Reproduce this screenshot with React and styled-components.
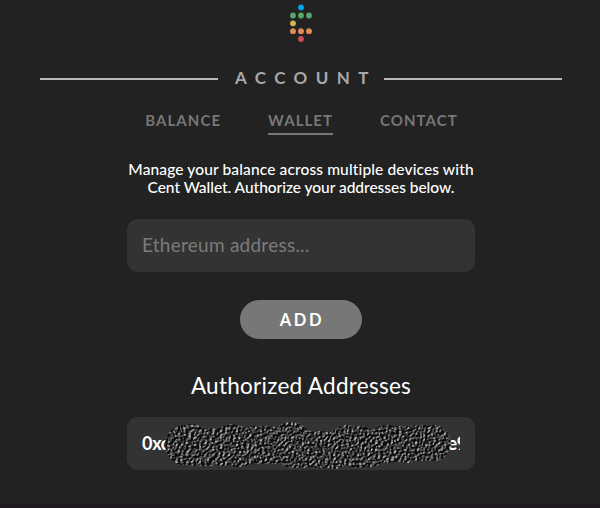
import React from "react";
import styled, { createGlobalStyle } from "styled-components";

const tabs = [
  { label: "BALANCE", active: false },
  { label: "WALLET", active: true },
  { label: "CONTACT", active: false },
];

const dots = [
  { x: 31, y: 7.5, color: "#00a4ea" },
  { x: 23, y: 15.5, color: "#55a868" },
  { x: 31, y: 15.5, color: "#55a868" },
  { x: 39, y: 15.5, color: "#55a868" },
  { x: 23, y: 23.3, color: "#ccb650" },
  { x: 23, y: 31.2, color: "#e08a58" },
  { x: 31, y: 31.2, color: "#e08a58" },
  { x: 39, y: 31.2, color: "#e08a58" },
  { x: 31, y: 39, color: "#d14c5c" },
];

// brush stamps: center x, center y, radius
const stamps = [
  [58, 28, 20],
  [64, 26, 19],
  [72, 31, 19],
  [84, 30, 19],
  [95, 30, 19],
  [106, 27, 20],
  [112, 30, 20],
  [128, 28, 19],
  [137, 28, 19],
  [148, 28, 19],
  [164, 25, 20],
  [166, 31, 20],
  [178, 32, 19],
  [193, 33, 19],
  [207, 33, 19],
  [221, 28, 20],
  [232, 30, 21],
  [243, 31, 19],
  [260, 27, 19],
  [270, 27, 18],
  [282, 27, 19],
  [294, 26, 18],
  [306, 26, 18],
];

const Logo = () => (
  <LogoSvg width="62" height="48" viewBox="0 0 62 48">
    {dots.map((d) => (
      <circle key={`${d.x}-${d.y}`} cx={d.x} cy={d.y} r="2.9" fill={d.color} />
    ))}
  </LogoSvg>
);

const Scribble = () => (
  <ScribbleSvg width="348" height="54" viewBox="0 0 348 54">
    <filter
      id="emboss"
      filterUnits="userSpaceOnUse"
      x="0"
      y="0"
      width="348"
      height="54"
      colorInterpolationFilters="sRGB"
    >
      <feTurbulence
        type="fractalNoise"
        baseFrequency="0.38 0.42"
        numOctaves="3"
        seed="8"
        result="noise"
      />
      <feDiffuseLighting
        in="noise"
        surfaceScale="5"
        diffuseConstant="1"
        lightingColor="#ffffff"
        result="light"
      >
        <feDistantLight azimuth="215" elevation="25" />
      </feDiffuseLighting>
      <feComponentTransfer in="light" result="toned">
        <feFuncR type="table" tableValues="0.05 0.18 0.26 0.36 0.72" />
        <feFuncG type="table" tableValues="0.05 0.18 0.26 0.36 0.72" />
        <feFuncB type="table" tableValues="0.05 0.18 0.26 0.36 0.72" />
      </feComponentTransfer>
      <feComposite in="toned" in2="SourceGraphic" operator="in" />
    </filter>
    <g filter="url(#emboss)">
      {stamps.map(([x, y, r]) => (
        <circle key={`${x}-${y}`} cx={x} cy={y} r={r} />
      ))}
    </g>
  </ScribbleSvg>
);

const App = () => {
  return (
    <Page>
      <GlobalStyle />
      <Logo />
      <TitleRow>
        <Line />
        <Title>ACCOUNT</Title>
        <Line />
      </TitleRow>
      <Tabs>
        {tabs.map((tab) => (
          <Tab key={tab.label} $active={tab.active}>
            {tab.label}
          </Tab>
        ))}
      </Tabs>
      <Description>
        <DescLine $spacing="0.13px">
          Manage your balance across multiple devices with
        </DescLine>
        <DescLine $spacing="-0.03px">
          Cent Wallet. Authorize your addresses below.
        </DescLine>
      </Description>
      <AddressInput placeholder="Ethereum address..." />
      <AddButton>ADD</AddButton>
      <Heading>Authorized Addresses</Heading>
      <AddressBox>
        <AddressText>
          <span>0xc</span>
          <span>e9</span>
        </AddressText>
        <Scribble />
      </AddressBox>
      <BottomEdge />
    </Page>
  );
};

export default App;

const GlobalStyle = createGlobalStyle`
  * {
    box-sizing: border-box;
  }
  body {
    margin: 0;
    background-color: #222222;
    font-family: Lato, "Liberation Sans", sans-serif;
  }
`;
const Page = styled.main`
  display: flex;
  flex-direction: column;
  align-items: center;
  width: 600px;
  height: 508px;
  overflow: hidden;
  background-color: #222222;
  color: #ffffff;
`;
const LogoSvg = styled.svg`
  flex: none;
  margin-left: 2px;
`;
const TitleRow = styled.header`
  display: flex;
  align-items: center;
  width: 522px;
  height: 24px;
  margin: 19px 0 0 2px;
`;
const Line = styled.div`
  width: 178px;
  height: 2px;
  background-color: #b9b9b9;
`;
const Title = styled.h1`
  width: 166px;
  margin: 0;
  padding-left: 17px;
  color: #a8a8a8;
  font-size: 17px;
  font-weight: 700;
  line-height: 22px;
  padding-bottom: 2px;
  letter-spacing: 8.4px;
  white-space: nowrap;
`;
const Tabs = styled.nav`
  display: flex;
  gap: 47px;
  height: 24px;
  margin: 20px 0 0 3px;
`;
const Tab = styled.a`
  height: 24px;
  border-bottom: 2px solid ${({ $active }) => ($active ? "#777777" : "transparent")};
  color: #777777;
  font-size: 15px;
  font-weight: 700;
  line-height: 19px;
  letter-spacing: 1.05px;
`;
const Description = styled.p`
  display: flex;
  flex-direction: column;
  align-items: center;
  margin: 25px 0 0 2px;
`;
const DescLine = styled.span`
  font-size: 15.5px;
  font-weight: 500;
  line-height: 18px;
  letter-spacing: ${({ $spacing }) => $spacing};
  white-space: nowrap;
`;
const AddressInput = styled.input`
  flex: none;
  width: 348px;
  height: 53px;
  margin: 23px 0 0 2px;
  padding: 0 15px 2px;
  border: none;
  border-radius: 11px;
  outline: none;
  background-color: #333333;
  font-family: inherit;
  font-size: 19px;
  letter-spacing: 0.25px;
  &::placeholder {
    color: #7b7b7b;
  }
`;
const AddButton = styled.button`
  flex: none;
  width: 122px;
  height: 39px;
  margin: 28px 0 0 2px;
  padding: 0 0 0 2px;
  border: none;
  border-radius: 20px;
  background-color: #777777;
  color: #ffffff;
  font-family: inherit;
  font-size: 16.5px;
  font-weight: 700;
  letter-spacing: 2.6px;
`;
const Heading = styled.h2`
  margin: 32px 0 0 2px;
  font-size: 22.5px;
  font-weight: 400;
  line-height: 30px;
  letter-spacing: 0.27px;
`;
const AddressBox = styled.div`
  position: relative;
  flex: none;
  width: 348px;
  height: 53px;
  margin: 16px 0 0 2px;
  padding: 0 15px;
  border-radius: 11px;
  background-color: #333333;
`;
const AddressText = styled.div`
  display: flex;
  justify-content: space-between;
  overflow: hidden;
  font-size: 18px;
  font-weight: 700;
  line-height: 53px;
  letter-spacing: -0.3px;
  & > span:last-child {
    margin-right: -7px;
  }
`;
const ScribbleSvg = styled.svg`
  position: absolute;
  top: 0;
  left: 0;
`;
const BottomEdge = styled.div`
  width: 100%;
  height: 4px;
  margin-top: auto;
  background-color: #1f1a1f;
`;
